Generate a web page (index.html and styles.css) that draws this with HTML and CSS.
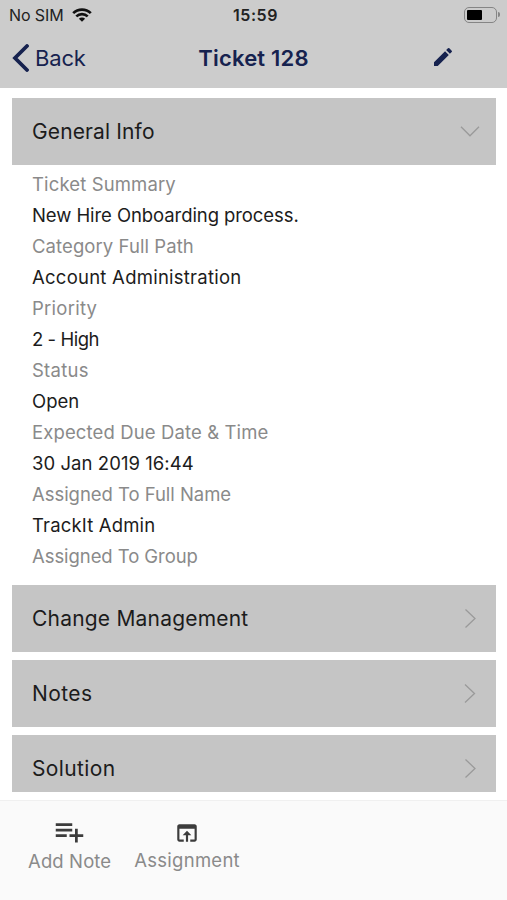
FILE: index.html
```html
<!DOCTYPE html>
<html lang="en">
<head>
  <meta charset="UTF-8">
  <meta name="viewport" content="width=device-width, initial-scale=1.0">
  <title>Ticket 128</title>
  <link rel="stylesheet" href="styles.css">
</head>
<body>
  <header class="header">
    <div class="status-bar">
      <div class="carrier">
        <span>No SIM</span>
        <svg class="wifi" viewBox="0 0 20 14" fill="none" stroke="#111" stroke-width="2.7">
          <path d="M1.2 5.1a12.7 12.7 0 0 1 17.6 0"/>
          <path d="M4.3 8.4a8.2 8.2 0 0 1 11.4 0"/>
          <path d="M10 13.8l-3.1-3.1a4.4 4.4 0 0 1 6.2 0z" fill="#111" stroke="none"/>
        </svg>
      </div>
      <span class="clock">15:59</span>
      <div class="battery"><span class="battery-cell"><span class="battery-level"></span></span><span class="battery-tip"></span></div>
    </div>
    <nav class="nav-bar">
      <a class="back">
        <svg class="back-icon" viewBox="0 0 17 28" fill="none" stroke="#16224f" stroke-width="3.8" stroke-linecap="round"><path d="M15 2L3 14l12 12"/></svg>
        <span>Back</span>
      </a>
      <h1 class="title">Ticket 128</h1>
      <div class="actions">
        <svg class="edit-icon" viewBox="0 0 24 24" fill="#16224f"><path d="M3 17.25V21h3.75L17.81 9.94l-3.75-3.75L3 17.25zM20.71 7.04a1 1 0 0 0 0-1.41l-2.34-2.34a1 1 0 0 0-1.41 0l-1.83 1.83 3.75 3.75 1.83-1.83z"/></svg>
      </div>
    </nav>
  </header>

  <main class="content">
    <section class="group">
      <div class="group-header">
        <h2 class="general">General Info</h2>
        <svg class="chevron" viewBox="0 0 20 20"><path d="M1 4.8l9 9 9-9"/></svg>
      </div>
      <dl class="fields">
        <dt class="summary">Ticket Summary</dt>
        <dd class="summary-value">New Hire Onboarding process.</dd>
        <dt class="category">Category Full Path</dt>
        <dd class="category-value">Account Administration</dd>
        <dt class="priority">Priority</dt>
        <dd class="priority-value">2 - High</dd>
        <dt class="status">Status</dt>
        <dd class="status-value">Open</dd>
        <dt class="due">Expected Due Date &amp; Time</dt>
        <dd class="due-value">30 Jan 2019 16:44</dd>
        <dt class="assignee">Assigned To Full Name</dt>
        <dd class="assignee-value">TrackIt Admin</dd>
        <dt class="team">Assigned To Group</dt>
      </dl>
    </section>
    <section class="group">
      <div class="group-header">
        <h2 class="change">Change Management</h2>
        <svg class="chevron" viewBox="0 0 20 20"><path d="M5.5 .5l9.5 9-9.5 9"/></svg>
      </div>
    </section>
    <section class="group">
      <div class="group-header">
        <h2 class="notes">Notes</h2>
        <svg class="chevron" viewBox="0 0 20 20"><path d="M5 .5l9.5 9-9.5 9"/></svg>
      </div>
    </section>
    <section class="group">
      <div class="group-header">
        <h2 class="solution">Solution</h2>
        <svg class="chevron" viewBox="0 0 20 20"><path d="M5.5 .5l9.5 9-9.5 9"/></svg>
      </div>
    </section>
  </main>

  <footer class="toolbar">
    <button class="tool add-note">
      <svg viewBox="0 0 24 24"><path d="M14 10H2v2h12v-2zm0-4H2v2h12V6zm4 8v-4h-2v4h-4v2h4v4h2v-4h4v-2h-4zM2 16h8v-2H2v2z"/></svg>
      <span>Add Note</span>
    </button>
    <button class="tool assignment">
      <svg viewBox="0 0 24 24"><path d="M19 4H5c-1.11 0-2 .9-2 2v12c0 1.1.89 2 2 2h4v-2H5V8h14v10h-4v2h4c1.1 0 2-.9 2-2V6c0-1.1-.89-2-2-2zm-7 6l-4 4h3v6h2v-6h3l-4-4z"/></svg>
      <span>Assignment</span>
    </button>
  </footer>
</body>
</html>
```
FILE: styles.css
```css
:root {
  --color-header: #cccccc;
  --color-group: #c5c5c5;
  --color-navy: #16224f;
  --color-text: #1c1c1c;
  --color-label: #8a8a8a;
  --font-family: Inter, "Liberation Sans", sans-serif;
}
* { box-sizing: border-box; margin: 0; padding: 0; }
body {
  height: 900px;
  display: flex;
  flex-direction: column;
  overflow: hidden;
  background: #fff;
  color: var(--color-text);
  font-family: var(--font-family);
}

/* Header */
.header { height: 88px; flex-shrink: 0; background: var(--color-header); }
.status-bar {
  height: 29px;
  display: grid;
  grid-template-columns: 1fr auto 1fr;
  align-items: center;
  padding: 0 7px 0 9px;
  color: #222;
  font-size: 16px;
}
.carrier { display: flex; align-items: center; gap: 8px; letter-spacing: -0.1px; }
.wifi { width: 20px; height: 14px; }
.clock { padding-left: 2px; font-weight: 600; letter-spacing: 0.6px; }
.battery { display: flex; align-items: center; justify-content: flex-end; gap: 1px; }
.battery-cell {
  width: 33px;
  height: 16px;
  padding: 2px;
  border: 1px solid #858585;
  border-radius: 5px;
}
.battery-level { display: block; width: 15px; height: 10px; background: #000; border-radius: 1px; }
.battery-tip { width: 2px; height: 5px; background: #858585; border-radius: 0 2px 2px 0; }
.nav-bar {
  height: 57px;
  display: grid;
  grid-template-columns: 1fr auto 1fr;
  align-items: center;
  padding: 0 12px;
  color: var(--color-navy);
}
.back { display: flex; align-items: center; gap: 6px; font-size: 22px; letter-spacing: -0.15px; }
.back-icon { width: 17px; height: 28px; }
.title { font-size: 22px; font-weight: 600; letter-spacing: 0.2px; }
.actions { display: flex; justify-content: flex-end; padding-right: 40px; }
.edit-icon { width: 24px; height: 24px; margin-top: -2px; }

/* Groups */
.content {
  height: 704px;
  flex-shrink: 0;
  display: flex;
  flex-direction: column;
  gap: 8px;
  padding: 10px 11px 0 12px;
  overflow: hidden;
}
.group-header {
  height: 67px;
  display: flex;
  align-items: center;
  justify-content: space-between;
  padding: 0 16px 0 20px;
  background: var(--color-group);
}
.group-header h2 { font-size: 21px; font-weight: 400; }
.group-header .general { letter-spacing: 0.13px; }
.group-header .change { letter-spacing: 0.2px; }
.group-header .notes { letter-spacing: 0.4px; }
.group-header .solution { letter-spacing: 0.36px; }
.chevron { width: 20px; height: 20px; fill: none; stroke: #9a9a9a; stroke-width: 1.3; }
.fields { height: 412px; padding: 4px 20px 0; font-size: 18.5px; line-height: 31px; }
.fields dt { color: var(--color-label); }
.summary { letter-spacing: 0.13px; }
.summary-value { letter-spacing: -0.08px; }
.category { letter-spacing: 0.08px; }
.category-value { letter-spacing: 0.25px; }
.priority { letter-spacing: 0.25px; }
.priority-value { letter-spacing: -0.45px; }
.status { letter-spacing: 0.25px; }
.due { letter-spacing: 0.12px; }
.due-value { letter-spacing: 0.06px; }
.assignee { letter-spacing: -0.04px; }
.assignee-value { letter-spacing: 0.16px; }
.team { letter-spacing: -0.07px; }

/* Toolbar */
.toolbar {
  height: 100px;
  flex-shrink: 0;
  display: flex;
  align-items: flex-start;
  gap: 23px;
  margin-top: 8px;
  padding: 14px 28px 0;
  border-top: 1px solid #f0f0f0;
  background: #fafafa;
}
.tool {
  display: flex;
  flex-direction: column;
  align-items: center;
  border: none;
  background: none;
  color: var(--color-label);
  font-family: inherit;
  font-size: 18.5px;
  line-height: 24px;
}
.tool svg { width: 33px; height: 33px; fill: #3c3c3c; }
.add-note { gap: 1px; letter-spacing: 0.12px; }
.assignment { gap: 2px; padding-top: 5px; letter-spacing: 0.26px; }
.assignment svg { width: 26px; height: 26px; }
```
